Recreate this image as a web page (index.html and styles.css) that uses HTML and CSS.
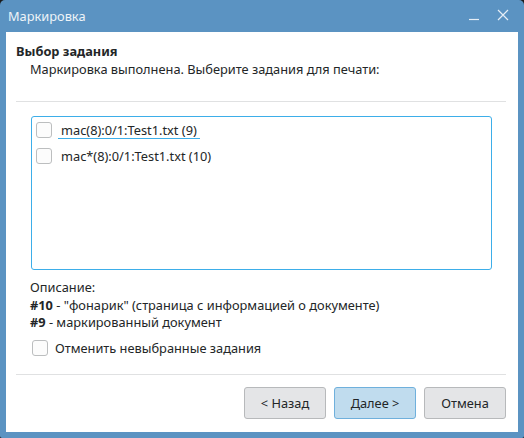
FILE: index.html
```html
<!DOCTYPE html>
<html lang="ru">
<head>
<meta charset="utf-8">
<title>Маркировка</title>
<link rel="stylesheet" href="styles.css">
</head>
<body>
<div class="window">
  <div class="titlebar">
    <span class="title">Маркировка</span>
    <div class="title-buttons">
      <svg class="tb-icon" width="12" height="12" viewBox="0 0 12 12"><path d="M1 10.5H11" stroke="#e6eef6" stroke-width="1.2" fill="none"/></svg>
      <svg class="tb-icon" width="12" height="12" viewBox="0 0 12 12"><path d="M1 1L11 11M11 1L1 11" stroke="#e6eef6" stroke-width="1.2" fill="none"/></svg>
    </div>
  </div>
  <div class="content">
    <div class="header">
      <div class="heading">Выбор задания</div>
      <div class="subheading">Маркировка выполнена. Выберите задания для печати:</div>
    </div>
    <div class="separator"></div>
    <div class="listbox">
      <div class="row"><span class="checkbox"></span><span class="label focused">mac(8):0/1:Test1.txt (9)</span></div>
      <div class="row"><span class="checkbox"></span><span class="label">mac*(8):0/1:Test1.txt (10)</span></div>
    </div>
    <div class="description">
      <div>Описание:</div>
      <div><b>#10</b> - "фонарик" (страница с информацией о документе)</div>
      <div><b>#9</b> - маркированный документ</div>
    </div>
    <div class="option"><span class="checkbox"></span><span class="option-label">Отменить невыбранные задания</span></div>
    <div class="separator sep2"></div>
    <div class="buttons">
      <button class="btn">&lt; Назад</button>
      <button class="btn default">Далее &gt;</button>
      <button class="btn">Отмена</button>
    </div>
  </div>
</div>
</body>
</html>
```
FILE: styles.css
```css
html, body {
  margin: 0;
  padding: 0;
  background: #1b1b1b;
}
body {
  width: 524px;
  height: 438px;
  overflow: hidden;
  font-family: "Noto Sans", "Open Sans", sans-serif;
  font-size: 12.8px;
  color: #232627;
}
.window {
  width: 524px;
  height: 438px;
  background: #5b93c2;
  border-radius: 5px 5px 2px 2px;
  display: flex;
  flex-direction: column;
  box-sizing: border-box;
  padding: 0 6px 6px 6px;
}
.titlebar {
  height: 32px;
  display: flex;
  align-items: center;
  justify-content: space-between;
  padding: 0 9px 0 2px;
}
.title {
  color: #eef3f8;
  font-size: 12.8px;
  line-height: 18px;
  padding-bottom: 1px;
}
.title-buttons {
  display: flex;
  gap: 17px;
  align-items: center;
  padding-bottom: 2px;
}
.tb-icon { display: block; }
.content {
  flex: 1;
  background: #ffffff;
  padding: 10px 12px 0 10px;
  display: flex;
  flex-direction: column;
}
.heading {
  font-weight: bold;
  line-height: 18px;
}
.subheading {
  line-height: 19px;
  padding-left: 14px;
}
.separator {
  height: 1px;
  background: #e0e1e2;
  margin-top: 22px;
}
.listbox {
  margin: 14px 0 0 15px;
  width: 461px;
  height: 154px;
  box-sizing: border-box;
  border: 1px solid #3daee9;
  border-radius: 3px;
  padding: 0 4px;
}
.row {
  height: 26px;
  display: flex;
  align-items: center;
}
.checkbox {
  width: 16px;
  height: 16px;
  box-sizing: border-box;
  border: 1px solid #bcbebf;
  border-radius: 3px;
  background: #fcfcfc;
  flex: none;
}
.label {
  margin-left: 6px;
  padding: 0 3px;
  line-height: 16px;
  border-bottom: 1px solid transparent;
}
.label.focused {
  border-bottom-color: #3daee9;
}
.description {
  margin-top: 9px;
  padding-left: 14px;
  line-height: 17.5px;
}
.description b {
  font-weight: bold;
}
.option {
  margin-top: 4px;
  height: 25px;
  display: flex;
  align-items: center;
  padding-left: 16px;
}
.option-label {
  margin-left: 7px;
}
.sep2 {
  margin-top: 13px;
}
.buttons {
  margin-top: 12px;
  display: flex;
  justify-content: flex-end;
  gap: 8px;
  padding-right: 0;
}
.btn {
  width: 82px;
  height: 32px;
  font-family: "Noto Sans", "Open Sans", sans-serif;
  font-size: 12.8px;
  color: #232627;
  background: #e4e5e7;
  border: 1px solid #b7b9bb;
  border-radius: 3px;
  padding: 0;
}
.btn.default {
  background: #c0dcee;
  border-color: #6fb0dc;
}
```
